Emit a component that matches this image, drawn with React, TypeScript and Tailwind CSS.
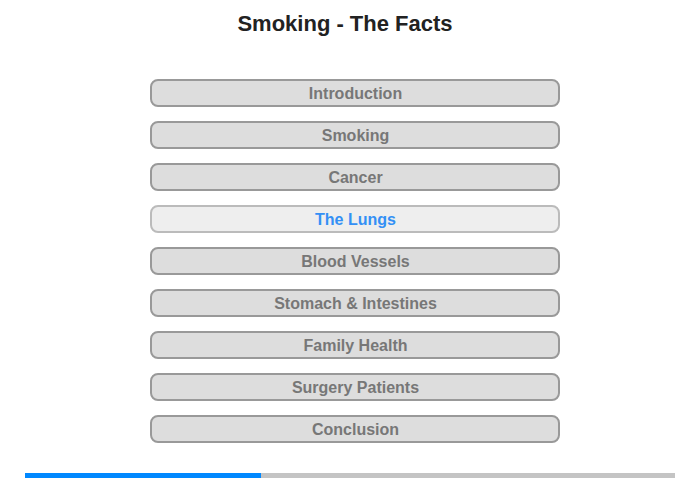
import React from 'react';

const SECTIONS = [
  'Introduction',
  'Smoking',
  'Cancer',
  'The Lungs',
  'Blood Vessels',
  'Stomach & Intestines',
  'Family Health',
  'Surgery Patients',
  'Conclusion',
];

export default function App() {
  const active = 'The Lungs';

  return (
    <div className="w-[700px] h-[480px] bg-white flex flex-col font-['Liberation_Sans',Arial,sans-serif]">
      <h1 className="pt-[11px] pr-[10px] text-center text-[22px] leading-[26px] font-bold text-[#222]">
        Smoking - The Facts
      </h1>

      {/* Section menu */}
      <div className="mt-[42px] flex flex-col items-center gap-[14px] pl-[9px]">
        {SECTIONS.map((s) => (
          <button
            key={s}
            className={`w-[410px] h-[28px] pt-[1px] pl-[2px] rounded-[8px] border-2 text-[16px] leading-none font-bold ${
              s === active
                ? 'bg-[#eeeeee] border-[#bbbbbb] text-[#3390f5]'
                : 'bg-[#dddddd] border-[#999999] text-[#777777]'
            }`}
          >
            {s}
          </button>
        ))}
      </div>

      {/* Progress */}
      <div className="mt-[30px] mx-[25px] h-[5px] bg-[#c4c4c4] flex">
        <div className="w-[236px] h-full bg-[#0088ff]" />
      </div>
    </div>
  );
}
